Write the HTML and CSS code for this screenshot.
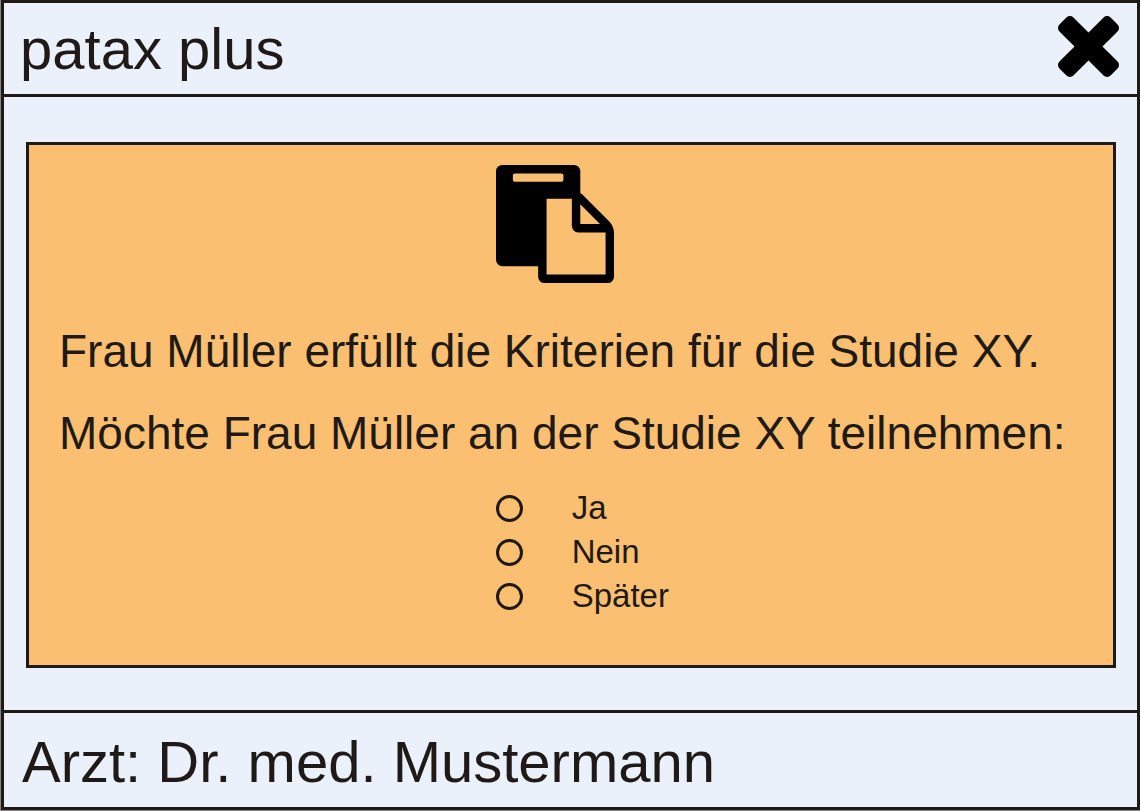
FILE: index.html
```
<!DOCTYPE html>
<html lang="de">
<head>
    <meta charset="utf-8">
    <title>patax plus</title>
    <link rel="stylesheet" href="styles.css">
</head>
<body>
    <div class="window">
        <header class="titlebar">
            <h1>patax plus</h1>
            <button type="button" class="close" aria-label="Schließen">
                <svg viewBox="302 366 1188 1188" aria-hidden="true">
                    <path d="M1490 1322q0 40-28 68l-136 136q-28 28-68 28t-68-28l-294-294-294 294q-28 28-68 28t-68-28l-136-136q-28-28-28-68t28-68l294-294-294-294q-28-28-28-68t28-68l136-136q28-28 68-28t68 28l294 294 294-294q28-28 68-28t68 28l136 136q28 28 28 68t-28 68l-294 294 294 294q28 28 28 68z"/>
                </svg>
            </button>
        </header>

        <main>
            <form class="panel">
                <svg class="paste-icon" viewBox="0 0 1792 1792" aria-hidden="true">
                    <path d="M768 1664h896v-640h-416q-40 0-68-28t-28-68v-416h-384v1152zm256-1440v-64q0-13-9.500-22.500t-22.500-9.500h-704q-13 0-22.500 9.500t-9.500 22.500v64q0 13 9.500 22.500t22.500 9.500h704q13 0 22.500-9.500t9.500-22.500zm256 672h299l-299-299v299zm512 128v672q0 40-28 68t-68 28h-960q-40 0-68-28t-28-68v-160h-544q-40 0-68-28t-28-68v-1344q0-40 28-68t68-28h1088q40 0 68 28t28 68v328q21 13 36 28l408 408q28 28 48 76t20 88z"/>
                </svg>

                <div class="message">
                    <p>Frau Müller erfüllt die Kriterien für die Studie XY.</p>
                    <p id="question">Möchte Frau Müller an der Studie XY teilnehmen:</p>
                </div>

                <div class="options" role="radiogroup" aria-labelledby="question">
                    <div class="option">
                        <input type="radio" name="answer" id="ja" value="ja">
                        <label for="ja">Ja</label>
                    </div>
                    <div class="option">
                        <input type="radio" name="answer" id="nein" value="nein">
                        <label for="nein">Nein</label>
                    </div>
                    <div class="option">
                        <input type="radio" name="answer" id="spaeter" value="spaeter">
                        <label for="spaeter">Später</label>
                    </div>
                </div>
            </form>
        </main>

        <footer class="statusbar">Arzt: Dr. med. Mustermann</footer>
    </div>
</body>
</html>
```
FILE: styles.css
```
* { box-sizing: border-box; }
body {
    margin: 0;
    padding: 0 0 1px 1px;
    min-height: 100vh;
    display: flex;
    background: #8a8786;
    color: #1f1a17;
    font-family: "Liberation Sans", Arial, sans-serif;
}
h1, p { margin: 0; font-weight: normal; }

.window {
    flex: 1;
    display: flex;
    flex-direction: column;
    border: 3px solid #1f1a17;
    background: #eaf1fa;
}

/* title bar and status bar */
.titlebar {
    display: flex;
    align-items: flex-start;
    justify-content: space-between;
    padding: 13px 18px 12px 16px;
    border-bottom: 3px solid #1f1a17;
}
.titlebar h1, .statusbar { font-size: 58px; line-height: 66px; }
.close {
    width: 61px;
    height: 61px;
    padding: 0;
    border: none;
    background: none;
    cursor: pointer;
}
.close svg { display: block; }
.statusbar {
    padding: 16px 18px 12px;
    border-top: 3px solid #1f1a17;
}

/* study question */
main { flex: 1; padding: 45px 21px 42px 22px; }
.panel {
    padding: 20px 0 47px 1px;
    border: 3px solid #1f1a17;
    background: #fabf71;
}
.paste-icon {
    display: block;
    width: 118px;
    height: 118px;
    margin-left: 43%;
}
.message {
    margin: 27px 0 12px;
    padding-left: 29px;
    font-size: 46px;
    line-height: 82px;
}
.options { margin-left: 43%; }
.option {
    display: flex;
    align-items: center;
    gap: 49px;
    height: 44px;
    font-size: 33px;
}
.option input {
    appearance: none;
    width: 27px;
    height: 27px;
    margin: 0;
    border: 3px solid #1f1a17;
    border-radius: 50%;
}
.option input:checked { background: radial-gradient(#1f1a17 45%, transparent 50%); }
```
